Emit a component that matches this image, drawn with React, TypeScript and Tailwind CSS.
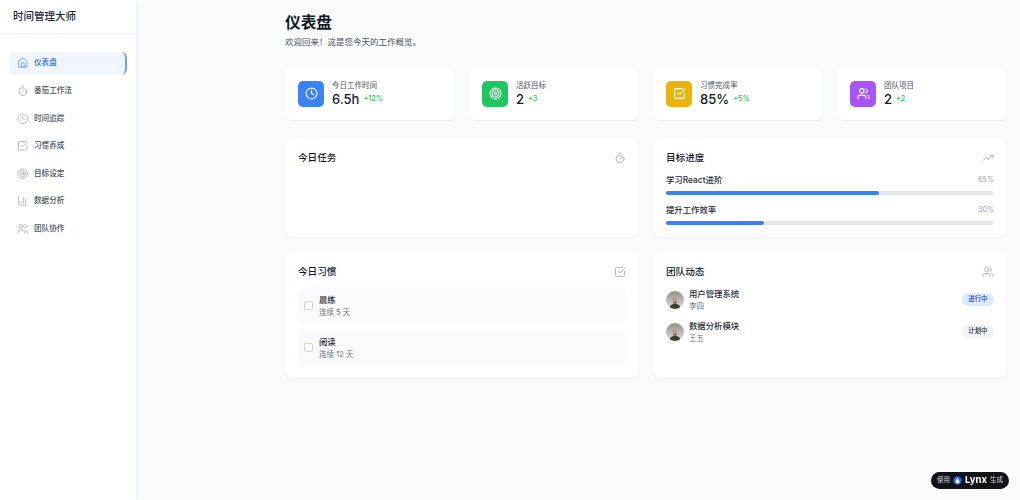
import React from "react";
import { Home, Timer, Clock, SquareCheckBig, Target, ChartColumn, Users, TrendingUp } from "lucide-react";

const nav = [
  { label: "仪表盘", Icon: Home, active: true },
  { label: "番茄工作法", Icon: Timer },
  { label: "时间追踪", Icon: Clock },
  { label: "习惯养成", Icon: SquareCheckBig },
  { label: "目标设定", Icon: Target },
  { label: "数据分析", Icon: ChartColumn },
  { label: "团队协作", Icon: Users },
];

const stats = [
  { label: "今日工作时间", value: "6.5h", delta: "+12%", Icon: Clock, bg: "bg-[#3b82f6]" },
  { label: "活跃目标", value: "2", delta: "+3", Icon: Target, bg: "bg-[#22c55e]" },
  { label: "习惯完成率", value: "85%", delta: "+5%", Icon: SquareCheckBig, bg: "bg-[#eab308]" },
  { label: "团队项目", value: "2", delta: "+2", Icon: Users, bg: "bg-[#a855f7]" },
];

function Avatar() {
  return (
    <svg viewBox="0 0 18 18" className="w-[18px] h-[18px] shrink-0 rounded-full">
      <defs>
        <linearGradient id="avbg" x1="0" y1="0" x2="0" y2="1">
          <stop offset="0" stopColor="#8f8f8c" />
          <stop offset="1" stopColor="#e2e2e0" />
        </linearGradient>
      </defs>
      <rect width="18" height="18" fill="url(#avbg)" />
      <path d="M3.5 18c0-3.6 2-5 5.5-5s5.5 1.4 5.5 5z" fill="#3c4030" />
      <ellipse cx="9" cy="8.6" rx="2.3" ry="3.3" fill="#c49a84" />
      <path d="M7.2 10.5c.6 1.6 3 1.6 3.6 0l.1 1.6c-1 .9-2.8.9-3.8 0z" fill="#54463c" />
    </svg>
  );
}

function Panel({ title, Icon, className, children }: { title: string; Icon: React.ElementType; className: string; children?: React.ReactNode }) {
  return (
    <section className={`bg-white rounded-[8px] shadow-[0_1px_2px_rgba(0,0,0,0.05)] px-[13px] pt-[13px] ${className}`}>
      <div className="flex items-center justify-between h-[14px]">
        <h2 className="text-[9.6px] leading-[14px] font-medium text-[#111827]">{title}</h2>
        <Icon className="w-[12px] h-[12px] text-[#9ca3af]" strokeWidth={1.5} />
      </div>
      {children}
    </section>
  );
}

function Goal({ name, pct, width }: { name: string; pct: string; width: string }) {
  return (
    <div>
      <div className="flex items-center justify-between h-[14px] pt-[1px]">
        <span className="text-[8.4px] font-medium text-[#1f2937]">{name}</span>
        <span className="text-[7.2px] text-[#9ca3af]">{pct}</span>
      </div>
      <div className="mt-[4px] h-[4.5px] rounded-full bg-[#e5e7eb]">
        <div className={`h-full rounded-full bg-[#3b82f6] ${width}`} />
      </div>
    </div>
  );
}

function Habit({ name, streak }: { name: string; streak: string }) {
  return (
    <div className="h-[36px] rounded-[6px] bg-[#f9fafb] flex items-center pl-[6px] gap-[6px]">
      <span className="w-[9px] h-[9px] rounded-[2px] border border-[#d1d5db] bg-white" />
      <div className="pt-[1px]">
        <div className="text-[8.4px] leading-[13px] font-medium text-[#1f2937]">{name}</div>
        <div className="text-[7.5px] leading-[11px] text-[#6b7280]">{streak}</div>
      </div>
    </div>
  );
}

function Member({ name, who, tag, tagClass }: { name: string; who: string; tag: string; tagClass: string }) {
  return (
    <div className="flex items-center h-[26px]">
      <Avatar />
      <div className="ml-[5px] flex-1">
        <div className="text-[8.4px] leading-[13px] font-medium text-[#1f2937]">{name}</div>
        <div className="text-[7.5px] leading-[11px] text-[#6b7280]">{who}</div>
      </div>
      <span className={`h-[12.5px] px-[6.5px] rounded-full text-[6.4px] leading-[12.5px] font-medium ${tagClass}`}>{tag}</span>
    </div>
  );
}

export default function App() {
  return (
    <div className="flex w-[1020px] h-[500px] overflow-hidden bg-[#f9fafb] font-['Inter','Noto_Sans_CJK_SC',sans-serif]">
      <aside className="w-[136px] h-full shrink-0 bg-white shadow-[0_1px_3px_rgba(0,0,0,0.1)]">
        <div className="h-[34px] border-b border-[#f3f4f6] pl-[13px] flex items-center">
          <h1 className="text-[10.5px] font-medium text-[#1f2937]">时间管理大师</h1>
        </div>
        <nav className="pt-[17.6px] pl-[9px] pr-[9px] flex flex-col gap-[4.6px]">
          {nav.map(({ label, Icon, active }) => (
            <div
              key={label}
              className={`h-[23px] flex items-center gap-[5.5px] pl-[8px] rounded-[6px] text-[7.6px] font-medium ${
                active ? "bg-[#eff6ff] text-[#2563eb] border-r-2 border-[#60a5fa]" : "text-[#4b5563]"
              }`}
            >
              <Icon className={`w-[11.5px] h-[11.5px] ${active ? "text-[#3b82f6]" : "text-[#9ca3af]"}`} strokeWidth={1.5} />
              <span>{label}</span>
            </div>
          ))}
        </nav>
      </aside>
      <main className="flex-1 pl-[149px] pr-[13px] pt-[13px]">
        <h1 className="text-[15.7px] leading-[19px] font-semibold text-[#111827]">仪表盘</h1>
        <p className="mt-[4px] text-[8.5px] leading-[13px] text-[#4b5563]">欢迎回来！这是您今天的工作概览。</p>
        <div className="mt-[18px] grid grid-cols-4 gap-[14px]">
          {stats.map(({ label, value, delta, Icon, bg }) => (
            <div key={label} className="h-[53px] bg-white rounded-[8px] shadow-[0_1px_2px_rgba(0,0,0,0.05)] flex items-center pl-[13px] gap-[8px]">
              <div className={`w-[26px] h-[26px] rounded-[5px] flex items-center justify-center ${bg}`}>
                <Icon className="w-[13px] h-[13px] text-white" strokeWidth={2} />
              </div>
              <div>
                <div className="text-[7.5px] leading-[11px] text-[#4b5563]">{label}</div>
                <div className="flex items-center gap-[4px] h-[16px]">
                  <span className="text-[13px] leading-[16px] font-medium text-[#111827]">{value}</span>
                  <span className="text-[7.3px] font-medium text-[#22c55e]">{delta}</span>
                </div>
              </div>
            </div>
          ))}
        </div>
        <div className="mt-[18px] grid grid-cols-2 gap-x-[14px] gap-y-[15px]">
          <Panel title="今日任务" Icon={Timer} className="h-[99px]" />
          <Panel title="目标进度" Icon={TrendingUp} className="h-[99px]">
            <div className="mt-[7.7px] flex flex-col gap-[7.5px]">
              <Goal name="学习React进阶" pct="65%" width="w-[65%]" />
              <Goal name="提升工作效率" pct="30%" width="w-[30%]" />
            </div>
          </Panel>
          <Panel title="今日习惯" Icon={SquareCheckBig} className="h-[126px]">
            <div className="mt-[8.3px] flex flex-col gap-[6.5px]">
              <Habit name="晨练" streak="连续 5 天" />
              <Habit name="阅读" streak="连续 12 天" />
            </div>
          </Panel>
          <Panel title="团队动态" Icon={Users} className="h-[126px]">
            <div className="mt-[7.5px] flex flex-col gap-[6px]">
              <Member name="用户管理系统" who="李四" tag="进行中" tagClass="bg-[#dbeafe] text-[#1e40af]" />
              <Member name="数据分析模块" who="王五" tag="计划中" tagClass="bg-[#f3f4f6] text-[#1f2937]" />
            </div>
          </Panel>
        </div>
      </main>
      <div className="fixed right-[11px] bottom-[11px] h-[17px] w-[78px] rounded-full bg-[#111318] flex items-center justify-center gap-[3px] text-[6.5px] text-[#d1d5db]">
        <span>使用</span>
        <svg viewBox="0 0 10 10" className="w-[9px] h-[9px]">
          <circle cx="5" cy="5" r="4.6" fill="#2563eb" />
          <path d="M5 1.6 7.4 6.5A2.5 2.5 0 0 1 2.6 6.5z" fill="#fff" />
        </svg>
        <span className="text-[9.5px] font-bold text-white">Lynx</span>
        <span>生成</span>
      </div>
    </div>
  );
}
